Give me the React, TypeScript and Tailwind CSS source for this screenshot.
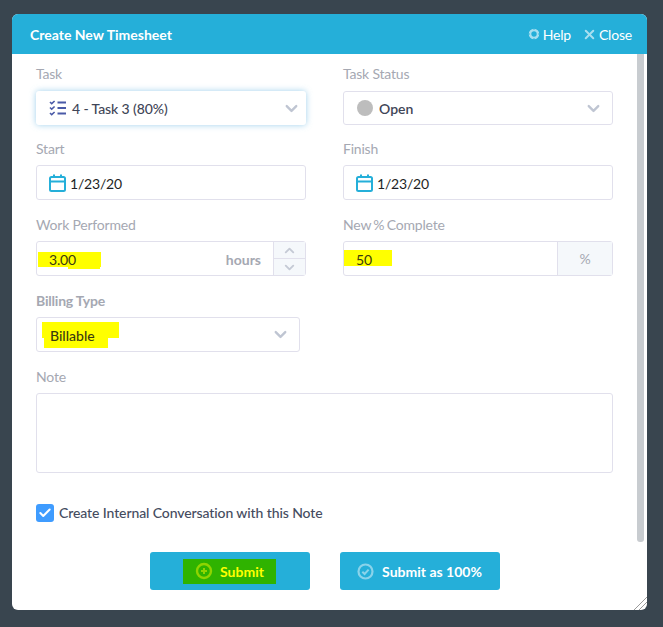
import React from 'react'
import { ChevronDown, ChevronUp, X, Check } from 'lucide-react'

function Label({ children }: { children: React.ReactNode }) {
    return <div className="h-[25px] text-[14px] leading-[17px] tracking-[-0.2px] text-[#a5a8b2]">{children}</div>
}

function Calendar() {
    return (
        <svg width="17" height="18" viewBox="0 0 17 18" fill="none" className="shrink-0">
            <rect x="1" y="3" width="15" height="14" rx="1.5" stroke="#25afd9" strokeWidth="2" />
            <path d="M1 7.5h15" stroke="#25afd9" strokeWidth="2" />
            <path d="M5 0.5v3M12 0.5v3" stroke="#25afd9" strokeWidth="2" />
        </svg>
    )
}

function DateField({ value }: { value: string }) {
    return (
        <div className="flex h-[35px] items-center gap-[4px] rounded-[3px] border border-[#e1e0ec] pl-[12px] text-[14px] tracking-[-0.2px] text-[#1d1f24]">
            <Calendar />
            <span className="pt-[2px]">{value}</span>
        </div>
    )
}

function Chevron() {
    return <ChevronDown size={19} strokeWidth={3} className="text-[#bfc5d2]" />
}

function TaskListIcon() {
    return (
        <svg width="18" height="16" viewBox="0 0 18 16" fill="none" stroke="#4a5aa8" className="shrink-0">
            <path d="M1 2l1.7 1.7L5.6 1M1 7.5l1.7 1.7 2.9-2.7M1 13l1.7 1.7 2.9-2.7" strokeWidth="1.6" />
            <path d="M8.5 2.5H17M8.5 8H17M8.5 13.5H17" strokeWidth="2" />
        </svg>
    )
}

function HelpRing() {
    return (
        <svg width="12" height="12" viewBox="0 0 12 12" fill="none" className="mr-[3px]">
            <circle cx="6" cy="6" r="4" stroke="#a8dff0" strokeWidth="2.6" />
            <path d="M6 0v2M6 10v2M0 6h2M10 6h2" stroke="#25afd9" strokeWidth="0.8" />
        </svg>
    )
}

export default function App() {
    return (
        <div className="h-[627px] w-[663px] overflow-hidden bg-[#39454f] pl-[12px] pt-[14px] font-['Lato',sans-serif]">
            <div className="relative h-[596px] w-[635px] overflow-hidden rounded-[6px] bg-white">
                <div className="flex h-[40px] items-center justify-between bg-[#25afd9] pl-[18px] pr-[15px] text-white">
                    <span className="text-[14px] font-bold">Create New Timesheet</span>
                    <div className="flex items-center text-[14px] tracking-[-0.2px]">
                        <HelpRing />
                        <span>Help</span>
                        <X size={15} strokeWidth={3.2} className="ml-[11px] mr-[2px] text-[#a8dff0]" />
                        <span>Close</span>
                    </div>
                </div>

                <div className="pl-[24px] pr-[34px] pt-[11px]">
                    <div className="grid grid-cols-[270px_270px] gap-x-[37px]">
                        <div>
                            <Label>Task</Label>
                            <div className="mt-[1px] flex h-[34px] items-center justify-between rounded-[3px] bg-white pl-[13px] pr-[5px] text-[14px] font-medium tracking-[-0.1px] text-[#3f4657] shadow-[0_0_6px_rgba(120,190,230,0.7)]">
                                <div className="flex items-center gap-[5px]">
                                    <TaskListIcon />
                                    <span>4 - Task 3 (80%)</span>
                                </div>
                                <Chevron />
                            </div>
                        </div>
                        <div>
                            <Label>Task Status</Label>
                            <div className="mt-[1px] flex h-[34px] items-center justify-between rounded-[3px] border border-[#e1e0ec] pl-[13px] pr-[9px] text-[14px] font-semibold text-[#3f4657]">
                                <div className="flex items-center gap-[6px]">
                                    <span className="h-[16px] w-[16px] rounded-full bg-[#bdbdbd]" />
                                    <span>Open</span>
                                </div>
                                <Chevron />
                            </div>
                        </div>

                        <div className="mt-[15px]">
                            <Label>Start</Label>
                            <DateField value="1/23/20" />
                        </div>
                        <div className="mt-[15px]">
                            <Label>Finish</Label>
                            <DateField value="1/23/20" />
                        </div>

                        <div className="mt-[16px]">
                            <Label>Work Performed</Label>
                            <div className="flex h-[35px] rounded-[3px] border border-[#e1e0ec]">
                                <div className="relative flex flex-1 items-center justify-between pl-[12px] pr-[12px] pt-[2px] text-[14px]">
                                    <span className="absolute left-[1px] top-[10px] h-[15px] w-[63px] bg-[#ffff00]" />
                                    <span className="absolute left-[31px] top-[12px] h-[15px] w-[32px] bg-[#ffff00]" />
                                    <span className="relative tracking-[-0.2px] text-[#3a3a10]">3.00</span>
                                    <span className="font-bold text-[#a5a8b2]">hours</span>
                                </div>
                                <div className="flex w-[32px] flex-col border-l border-[#e1e0ec] bg-[#f5f8fb]">
                                    <div className="flex flex-1 items-center justify-center border-b border-[#e1e0ec]">
                                        <ChevronUp size={15} strokeWidth={3} className="text-[#c5cad5]" />
                                    </div>
                                    <div className="flex flex-1 items-center justify-center">
                                        <ChevronDown size={15} strokeWidth={3} className="text-[#c5cad5]" />
                                    </div>
                                </div>
                            </div>
                        </div>
                        <div className="mt-[16px]">
                            <Label><span className="[word-spacing:-1px]">New % Complete</span></Label>
                            <div className="flex h-[35px] rounded-[3px] border border-[#e1e0ec]">
                                <div className="relative flex flex-1 items-center pl-[12px] pt-[2px] text-[14px]">
                                    <span className="absolute left-0 top-[8px] h-[16px] w-[48px] bg-[#ffff00]" />
                                    <span className="relative text-[#3a3a10]">50</span>
                                </div>
                                <div className="flex w-[55px] items-center justify-center border-l border-[#e1e0ec] bg-[#f5f8fb] text-[14px] text-[#a5a8b2]">%</div>
                            </div>
                        </div>
                    </div>

                    <div className="mt-[16px] w-[264px]">
                        <Label><span className="font-bold">Billing Type</span></Label>
                        <div className="relative flex h-[35px] items-center justify-between rounded-[3px] border border-[#e1e0ec] pl-[13px] pr-[9px] text-[14px] font-medium">
                            <span className="absolute left-[5px] top-[4px] h-[16px] w-[77px] bg-[#ffff00]" />
                            <span className="absolute left-[7px] top-[16px] h-[14px] w-[64px] bg-[#ffff00]" />
                            <span className="relative pt-[2px] text-[#3a3a10]">Billable</span>
                            <Chevron />
                        </div>
                    </div>

                    <div className="mt-[16px]">
                        <Label>Note</Label>
                        <div className="h-[80px] rounded-[3px] border border-[#e1e0ec]" />
                    </div>

                    <div className="mt-[29px] flex items-center gap-[5px]">
                        <span className="flex h-[18px] w-[18px] items-center justify-center rounded-[3px] bg-[#3f9cff]">
                            <Check size={14} strokeWidth={3.5} className="text-white" />
                        </span>
                        <span className="text-[14px] font-medium tracking-[-0.1px] text-[#454c60]">Create Internal Conversation with this Note</span>
                    </div>

                    <div className="mt-[29px] flex justify-center gap-[30px]">
                        <div className="flex h-[38px] w-[160px] items-center justify-center rounded-[3px] bg-[#25afd9]">
                            <div className="relative flex items-center gap-[7px] px-[12px] py-[2px] text-[14px] font-bold text-[#ffff00]">
                                <span className="absolute inset-0 bg-[#2fb300]" />
                                <svg width="18" height="18" viewBox="0 0 18 18" fill="none" stroke="#8fd400" className="relative">
                                    <circle cx="9" cy="9" r="7" strokeWidth="2.4" />
                                    <path d="M9 6v6M6 9h6" strokeWidth="2" />
                                </svg>
                                <span className="relative">Submit</span>
                            </div>
                        </div>
                        <div className="flex h-[38px] w-[160px] items-center justify-center gap-[8px] rounded-[3px] bg-[#25afd9] text-[14px] font-bold text-white">
                            <svg width="17" height="17" viewBox="0 0 17 17" fill="none" stroke="#8ad3ea">
                                <circle cx="8.5" cy="8.5" r="7" strokeWidth="2.2" />
                                <path d="M5.3 8.7l2.3 2.3 4-4.4" strokeWidth="2" />
                            </svg>
                            <span>Submit as 100%</span>
                        </div>
                    </div>
                </div>

                {/* scrollbar thumb + resize grip sit on top of the dialog */}
                <div className="absolute right-[3px] top-[40px] h-[488px] w-[7px] rounded-b-[3px] bg-[#c8ccd0]" />
                <svg width="14" height="14" viewBox="0 0 14 14" className="absolute bottom-0 right-0" stroke="#9a9a9a" fill="none">
                    <path d="M1 14L14 1M6 14l8-8M11 14l3-3" strokeWidth="1" />
                </svg>
            </div>
        </div>
    )
}
